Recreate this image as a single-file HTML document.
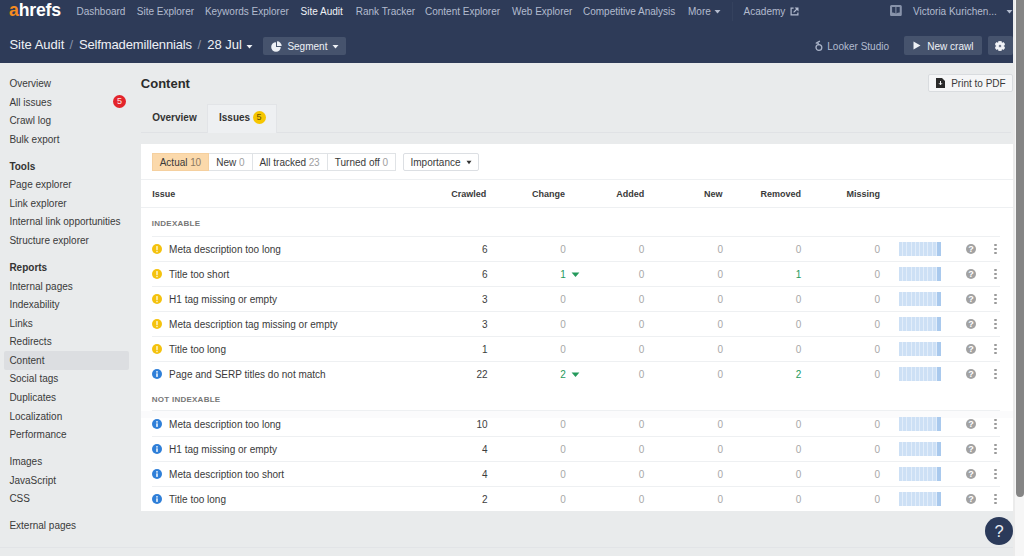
<!DOCTYPE html>
<html><head><meta charset="utf-8">
<style>
*{box-sizing:border-box;margin:0;padding:0}
html,body{width:1024px;height:556px;overflow:hidden;background:#e9ebec;font-family:"Liberation Sans",sans-serif;color:#333}
.a{position:absolute;white-space:nowrap}
.t10{font-size:10px;line-height:12px}
.t9{font-size:9px;line-height:12px}
.b{font-weight:bold}
#hdr{position:absolute;left:0;top:0;width:1014px;height:63px;background:#2e3b58}
.nav{color:#b3bccf}
.wht{color:#eef1f6}
.side{color:#3a3a3a}
.btn{position:absolute;background:#46536d;border-radius:2px}
.card{position:absolute;left:141px;top:144px;width:872px;height:367px;background:#fff}
.hl{position:absolute;height:1px;background:#eef0f2}
.seg{position:absolute;top:152.5px;height:18px;border:1px solid #dcdfe3;background:#fff}
.g{color:#9a9a9a}
.num{color:#3d3d3d;text-align:right}
.z{color:#a8a8a8}
.grn{color:#259a5c}
.spark{position:absolute;left:898.7px;width:42.3px;height:13.6px;background:repeating-linear-gradient(90deg,#cde0f5 0,#cde0f5 3.2px,#e2edfa 3.2px,#e2edfa 4.2px)}
.spark:after{content:"";position:absolute;right:0;top:0;width:3.6px;height:13.6px;background:#a9c9ed}
.ic{position:absolute;left:152px;width:10px;height:10px;border-radius:50%;color:#fff;font-size:8px;line-height:10px;text-align:center;font-weight:bold}
.yl{background:#f2c21b}
.bl{background:#2f7fd6}
.q{position:absolute;left:966px;width:10.2px;height:10.2px;border-radius:50%;background:#a2a2a2;color:#fff;font-size:9px;line-height:10.6px;text-align:center;font-weight:bold}
.kb{position:absolute;left:994px;width:3px;height:11px}
.kb i{position:absolute;left:0.4px;width:2.2px;height:2.2px;border-radius:50%;background:#9a9a9a}
#wrap{position:absolute;left:0;top:0;width:1024px;height:556px}
</style></head><body><div id="wrap">
<div id="hdr"></div>
<!-- logo -->
<div class="a b" style="left:9.3px;top:-1px;font-size:19px;line-height:22px;letter-spacing:-0.2px;color:#fff;transform:scaleX(0.93);transform-origin:0 0"><span style="color:#f68b1f">a</span>hrefs</div>
<!-- nav row 1 -->
<div class="a t10 nav" style="left:76.5px;top:6px">Dashboard</div>
<div class="a t10 nav" style="left:136.8px;top:6px">Site Explorer</div>
<div class="a t10 nav" style="left:204.9px;top:6px">Keywords Explorer</div>
<div class="a t10 wht" style="left:300.6px;top:6px">Site Audit</div>
<div class="a t10 nav" style="left:355.7px;top:6px">Rank Tracker</div>
<div class="a t10 nav" style="left:425px;top:6px">Content Explorer</div>
<div class="a t10 nav" style="left:512px;top:6px">Web Explorer</div>
<div class="a t10 nav" style="left:583px;top:6px">Competitive Analysis</div>
<div class="a t10 nav" style="left:688px;top:6px">More</div>
<svg class="a" style="left:714px;top:9px" width="7" height="5"><path d="M0.5 1h6L3.5 4.5z" fill="#b3bccf"/></svg>
<div class="a" style="left:732px;top:2px;width:1px;height:19px;background:#35425e"></div>
<div class="a t10 nav" style="left:743.6px;top:6px">Academy</div>
<svg class="a" style="left:789.5px;top:7.3px" width="9" height="9"><path d="M3.6 1.1H1.1V7.9H7.9V5.4" fill="none" stroke="#b3bccf" stroke-width="1.2"/><path d="M3.6 5.4L7 2" stroke="#b3bccf" stroke-width="1.2"/><path d="M4.6 0.5H8.5V4.4z" fill="#b3bccf"/></svg>
<svg class="a" style="left:889.8px;top:5.1px" width="12" height="11.2"><path fill-rule="evenodd" fill="#8893aa" d="M1.5 0h8.8a1.5 1.5 0 0 1 1.5 1.5v8.1a1.5 1.5 0 0 1-1.5 1.5h-8.8a1.5 1.5 0 0 1-1.5-1.5v-8.1a1.5 1.5 0 0 1 1.5-1.5zM2.1 2.1v5.5c1.4 0 2.5 0.3 3.3 0.9V2.1zM6.4 2.1v6.4c0.8-0.6 1.9-0.9 3.3-0.9V2.1z"/></svg>
<div class="a t10 nav" style="left:913px;top:6px">Victoria Kurichen...</div>
<svg class="a" style="left:1006px;top:9px" width="7" height="5"><path d="M0.5 1h6L3.5 4.5z" fill="#b3bccf"/></svg>

<!-- nav row 2 -->
<div class="a wht" style="left:9.4px;top:37px;font-size:13px;line-height:16px">Site Audit</div>
<div class="a" style="left:69.5px;top:37px;font-size:13px;line-height:16px;color:#8792a8">/</div>
<div class="a wht" style="left:79px;top:37px;font-size:13px;line-height:16px;letter-spacing:-0.14px">Selfmademillennials</div>
<div class="a" style="left:197.5px;top:37px;font-size:13px;line-height:16px;color:#8792a8">/</div>
<div class="a wht" style="left:207.3px;top:37px;font-size:13px;line-height:16px">28 Jul</div>
<svg class="a" style="left:245.5px;top:44px" width="7" height="5"><path d="M0.5 1h6L3.5 4.5z" fill="#eef1f6"/></svg>
<div class="btn" style="left:263px;top:36.6px;width:83px;height:18px"></div>
<svg class="a" style="left:270.5px;top:40.5px" width="11" height="11"><path d="M5 1.2A4.8 4.8 0 1 0 9.8 6H5z" fill="#eef1f6"/><path d="M6 0.3A4.8 4.8 0 0 1 10.7 5H6z" fill="#eef1f6"/></svg>
<div class="a t10 wht" style="left:287.4px;top:41px">Segment</div>
<svg class="a" style="left:331.5px;top:44px" width="7" height="5"><path d="M0.5 1h6L3.5 4.5z" fill="#eef1f6"/></svg>

<svg class="a" style="left:813.5px;top:40px" width="10" height="12"><circle cx="4.9" cy="7.5" r="2.9" fill="none" stroke="#a9b3c8" stroke-width="1.3"/><path d="M2.3 3.1L5.4 1.3M3.7 2.6L4.6 4.5" fill="none" stroke="#a9b3c8" stroke-width="1.4" stroke-linecap="round"/></svg>
<div class="a t10 nav" style="left:827.3px;top:41px">Looker Studio</div>
<div class="btn" style="left:904px;top:36.3px;width:78px;height:18.5px"></div>
<svg class="a" style="left:912.5px;top:41px" width="8" height="9"><path d="M0.5 0.5L7.5 4.5L0.5 8.5z" fill="#eef1f6"/></svg>
<div class="a t10 wht" style="left:927.3px;top:41px">New crawl</div>
<div class="btn" style="left:988px;top:36.3px;width:24.5px;height:18.5px"></div>
<svg class="a" style="left:995.3px;top:40.8px" width="10" height="10"><path fill-rule="evenodd" d="M3.05 1.62L3.67 1.34L3.88 0.13L6.12 0.13L6.33 1.34L6.95 1.62L7.51 2.01L8.66 1.59L9.78 3.54L8.84 4.32L8.90 5.00L8.84 5.68L9.78 6.46L8.66 8.41L7.51 7.99L6.95 8.38L6.33 8.66L6.12 9.87L3.88 9.87L3.67 8.66L3.05 8.38L2.49 7.99L1.34 8.41L0.22 6.46L1.16 5.68L1.10 5.00L1.16 4.32L0.22 3.54L1.34 1.59L2.49 2.01ZM6.50 5A1.5 1.5 0 1 0 3.50 5A1.5 1.5 0 1 0 6.50 5Z" fill="#f2f4f8" stroke="#f2f4f8" stroke-width="0.8" stroke-linejoin="round"/></svg>

<!-- scrollbar -->
<div class="a" style="left:1013px;top:0;width:11px;height:556px;background:#f6f6f6;border-left:2px solid #ebebeb"></div>
<div class="a" style="left:1015.5px;top:0;width:8px;height:497px;background:#858585;border-radius:0 0 4px 4px"></div>

<!-- sidebar -->
<div class="a" style="left:4px;top:350.5px;width:125px;height:19px;background:#dcdee1;border-radius:2px"></div>
<div class="a t10 side" style="left:9.4px;top:78px">Overview</div>
<div class="a t10 side" style="left:9.4px;top:96.7px">All issues</div>
<div class="a" style="left:113px;top:95.2px;width:13px;height:13px;border-radius:50%;background:#e3242b;color:#fde8e8;font-size:9px;line-height:13.5px;text-align:center">5</div>
<div class="a t10 side" style="left:9.4px;top:115.3px">Crawl log</div>
<div class="a t10 side" style="left:9.4px;top:133.6px">Bulk export</div>
<div class="a t10 side b" style="left:9.4px;top:160.9px;color:#333">Tools</div>
<div class="a t10 side" style="left:9.4px;top:178.9px">Page explorer</div>
<div class="a t10 side" style="left:9.4px;top:197.6px">Link explorer</div>
<div class="a t10 side" style="left:9.4px;top:215.8px">Internal link opportunities</div>
<div class="a t10 side" style="left:9.4px;top:234.5px">Structure explorer</div>
<div class="a t10 side b" style="left:9.4px;top:261.8px;color:#333">Reports</div>
<div class="a t10 side" style="left:9.4px;top:280.5px">Internal pages</div>
<div class="a t10 side" style="left:9.4px;top:298.7px">Indexability</div>
<div class="a t10 side" style="left:9.4px;top:318.2px">Links</div>
<div class="a t10 side" style="left:9.4px;top:335.6px">Redirects</div>
<div class="a t10 side" style="left:9.4px;top:355.2px">Content</div>
<div class="a t10 side" style="left:9.4px;top:372.8px">Social tags</div>
<div class="a t10 side" style="left:9.4px;top:391.5px">Duplicates</div>
<div class="a t10 side" style="left:9.4px;top:410.6px">Localization</div>
<div class="a t10 side" style="left:9.4px;top:428.9px">Performance</div>
<div class="a t10 side" style="left:9.4px;top:456.1px">Images</div>
<div class="a t10 side" style="left:9.4px;top:474.6px">JavaScript</div>
<div class="a t10 side" style="left:9.4px;top:492.9px">CSS</div>
<div class="a t10 side" style="left:9.4px;top:520.1px">External pages</div>
<div class="a" style="left:0;top:547px;width:1013px;height:1px;background:#e2e4e7"></div>

<!-- page title -->
<div class="a b" style="left:140.8px;top:75.6px;font-size:13px;line-height:16px;color:#2b2b2b">Content</div>
<div class="a" style="left:928px;top:74px;width:85px;height:18px;border:1px solid #d9dcdf;background:#f5f6f7;border-radius:2px"></div>
<svg class="a" style="left:936px;top:77.5px" width="9" height="10"><path d="M0 0h6l3 3v7H0z" fill="#2a2a2a"/><path d="M4.5 3v3.5M3 5.2l1.5 1.6 1.5-1.6" stroke="#f5f6f7" stroke-width="1" fill="none"/></svg>
<div class="a t10" style="left:951.2px;top:77.5px;color:#3a3a3a">Print to PDF</div>

<!-- tabs -->
<div class="a" style="left:141px;top:132px;width:870px;height:1px;background:#e0e2e5"></div>
<div class="a" style="left:207px;top:103.5px;width:69.5px;height:29.5px;border:1px solid #e2e4e7;border-bottom:none;background:#eef0f2"></div>
<div class="a t10 b" style="left:152.2px;top:112.4px;color:#333">Overview</div>
<div class="a t10 b" style="left:219px;top:112.4px;color:#333">Issues</div>
<div class="a" style="left:252.5px;top:111px;width:13px;height:13px;border-radius:50%;background:#f6c600;color:#6a5200;font-size:9px;line-height:13.5px;text-align:center">5</div>

<!-- card -->
<div class="card"></div>
<div class="seg" style="left:152px;width:244px;border-color:#e0e3e6"></div>
<div class="a" style="left:152px;top:152.5px;width:57px;height:18px;background:#fbd9ab;border:1px solid #f5d09f"></div>
<div class="a" style="left:251.5px;top:153.5px;width:1px;height:16px;background:#e0e3e6"></div>
<div class="a" style="left:326.5px;top:153.5px;width:1px;height:16px;background:#e0e3e6"></div>
<div class="seg" style="left:402.8px;width:76px;border-radius:2px"></div>
<div class="a t10" style="left:159.7px;top:156.6px;color:#3a3a3a">Actual <span style="letter-spacing:-0.3px;color:#8c7a63">10</span></div>
<div class="a t10" style="left:216.2px;top:156.6px;color:#3a3a3a">New <span style="letter-spacing:-0.3px;color:#a0a0a0">0</span></div>
<div class="a t10" style="left:259.4px;top:156.6px;color:#3a3a3a">All tracked <span style="letter-spacing:-0.3px;color:#a0a0a0">23</span></div>
<div class="a t10" style="left:334.8px;top:156.6px;color:#3a3a3a">Turned off <span style="letter-spacing:-0.3px;color:#a0a0a0">0</span></div>
<div class="a t10" style="left:410.5px;top:156.6px;color:#3a3a3a">Importance</div>
<svg class="a" style="left:466px;top:160px" width="6" height="5"><path d="M0.5 0.8h5L3 4.2z" fill="#333"/></svg>
<div class="hl" style="left:141px;top:179px;width:872px"></div>

<!-- header -->
<div class="a t9 b" style="left:152.2px;top:188px;color:#3a3a3a">Issue</div>
<div class="a t9 b" style="left:451.2px;top:188px;color:#3a3a3a">Crawled</div>
<div class="a t9 b" style="left:532.1px;top:188px;color:#3a3a3a">Change</div>
<div class="a t9 b" style="left:616.2px;top:188px;color:#3a3a3a">Added</div>
<div class="a t9 b" style="left:703.9px;top:188px;color:#3a3a3a">New</div>
<div class="a t9 b" style="left:760.4px;top:188px;color:#3a3a3a">Removed</div>
<div class="a t9 b" style="left:846.4px;top:188px;color:#3a3a3a">Missing</div>
<div class="hl" style="left:141px;top:206.5px;width:872px"></div>

<div class="a" style="left:984.8px;top:517px;width:28.4px;height:28.4px;border-radius:50%;background:#2b3a5a;color:#e8ecf4;font-size:16.5px;line-height:28.4px;text-align:center">?</div>
<!--ROWS-->
<div class="a b" style="left:151.8px;top:219.2px;font-size:8px;line-height:10px;letter-spacing:0.25px;color:#777">INDEXABLE</div>
<div class="hl" style="left:152px;top:236px;width:848px"></div>
<svg class="a" style="left:151.8px;top:244.4px" width="10" height="10"><circle cx="5" cy="5" r="5" fill="#f4c20e"/><rect x="4.25" y="2" width="1.5" height="4.2" rx="0.6" fill="#fff6cf"/><circle cx="5" cy="7.6" r="0.8" fill="#fff6cf"/></svg>
<div class="a t10 side" style="left:169.1px;top:244.0px;">Meta description too long</div>
<div class="a t10 num" style="right:536.4px;top:244.0px">6</div>
<div class="a t10 z" style="right:458.2px;top:244.0px">0</div>
<div class="a t10 z" style="right:379.6px;top:244.0px">0</div>
<div class="a t10 z" style="right:301.0px;top:244.0px">0</div>
<div class="a t10 z" style="right:222.6px;top:244.0px">0</div>
<div class="a t10 z" style="right:143.9px;top:244.0px">0</div>
<div class="spark" style="top:242.2px"></div>
<div class="q" style="top:244.0px">?</div>
<div class="kb" style="top:244.1px"><i style="top:0.2px"></i><i style="top:4.2px"></i><i style="top:8.2px"></i></div>
<div class="hl" style="left:152px;top:261px;width:848px"></div>
<svg class="a" style="left:151.8px;top:269.4px" width="10" height="10"><circle cx="5" cy="5" r="5" fill="#f4c20e"/><rect x="4.25" y="2" width="1.5" height="4.2" rx="0.6" fill="#fff6cf"/><circle cx="5" cy="7.6" r="0.8" fill="#fff6cf"/></svg>
<div class="a t10 side" style="left:169.1px;top:269.0px;">Title too short</div>
<div class="a t10 num" style="right:536.4px;top:269.0px">6</div>
<div class="a t10 grn" style="right:458.2px;top:269.0px">1</div>
<svg class="a" style="left:570.5px;top:271.5px" width="9" height="6"><path d="M0.6 0.4h7.8L4.5 4.9z" fill="#259a5c"/></svg>
<div class="a t10 z" style="right:379.6px;top:269.0px">0</div>
<div class="a t10 z" style="right:301.0px;top:269.0px">0</div>
<div class="a t10 grn" style="right:222.6px;top:269.0px">1</div>
<div class="a t10 z" style="right:143.9px;top:269.0px">0</div>
<div class="spark" style="top:267.2px"></div>
<div class="q" style="top:269.0px">?</div>
<div class="kb" style="top:269.1px"><i style="top:0.2px"></i><i style="top:4.2px"></i><i style="top:8.2px"></i></div>
<div class="hl" style="left:152px;top:286px;width:848px"></div>
<svg class="a" style="left:151.8px;top:294.4px" width="10" height="10"><circle cx="5" cy="5" r="5" fill="#f4c20e"/><rect x="4.25" y="2" width="1.5" height="4.2" rx="0.6" fill="#fff6cf"/><circle cx="5" cy="7.6" r="0.8" fill="#fff6cf"/></svg>
<div class="a t10 side" style="left:169.1px;top:294.0px;">H1 tag missing or empty</div>
<div class="a t10 num" style="right:536.4px;top:294.0px">3</div>
<div class="a t10 z" style="right:458.2px;top:294.0px">0</div>
<div class="a t10 z" style="right:379.6px;top:294.0px">0</div>
<div class="a t10 z" style="right:301.0px;top:294.0px">0</div>
<div class="a t10 z" style="right:222.6px;top:294.0px">0</div>
<div class="a t10 z" style="right:143.9px;top:294.0px">0</div>
<div class="spark" style="top:292.2px"></div>
<div class="q" style="top:294.0px">?</div>
<div class="kb" style="top:294.1px"><i style="top:0.2px"></i><i style="top:4.2px"></i><i style="top:8.2px"></i></div>
<div class="hl" style="left:152px;top:311px;width:848px"></div>
<svg class="a" style="left:151.8px;top:319.4px" width="10" height="10"><circle cx="5" cy="5" r="5" fill="#f4c20e"/><rect x="4.25" y="2" width="1.5" height="4.2" rx="0.6" fill="#fff6cf"/><circle cx="5" cy="7.6" r="0.8" fill="#fff6cf"/></svg>
<div class="a t10 side" style="left:169.1px;top:319.0px;">Meta description tag missing or empty</div>
<div class="a t10 num" style="right:536.4px;top:319.0px">3</div>
<div class="a t10 z" style="right:458.2px;top:319.0px">0</div>
<div class="a t10 z" style="right:379.6px;top:319.0px">0</div>
<div class="a t10 z" style="right:301.0px;top:319.0px">0</div>
<div class="a t10 z" style="right:222.6px;top:319.0px">0</div>
<div class="a t10 z" style="right:143.9px;top:319.0px">0</div>
<div class="spark" style="top:317.2px"></div>
<div class="q" style="top:319.0px">?</div>
<div class="kb" style="top:319.1px"><i style="top:0.2px"></i><i style="top:4.2px"></i><i style="top:8.2px"></i></div>
<div class="hl" style="left:152px;top:336px;width:848px"></div>
<svg class="a" style="left:151.8px;top:344.4px" width="10" height="10"><circle cx="5" cy="5" r="5" fill="#f4c20e"/><rect x="4.25" y="2" width="1.5" height="4.2" rx="0.6" fill="#fff6cf"/><circle cx="5" cy="7.6" r="0.8" fill="#fff6cf"/></svg>
<div class="a t10 side" style="left:169.1px;top:344.0px;">Title too long</div>
<div class="a t10 num" style="right:536.4px;top:344.0px">1</div>
<div class="a t10 z" style="right:458.2px;top:344.0px">0</div>
<div class="a t10 z" style="right:379.6px;top:344.0px">0</div>
<div class="a t10 z" style="right:301.0px;top:344.0px">0</div>
<div class="a t10 z" style="right:222.6px;top:344.0px">0</div>
<div class="a t10 z" style="right:143.9px;top:344.0px">0</div>
<div class="spark" style="top:342.2px"></div>
<div class="q" style="top:344.0px">?</div>
<div class="kb" style="top:344.1px"><i style="top:0.2px"></i><i style="top:4.2px"></i><i style="top:8.2px"></i></div>
<div class="hl" style="left:152px;top:361px;width:848px"></div>
<svg class="a" style="left:151.8px;top:369.4px" width="10" height="10"><circle cx="5" cy="5" r="5" fill="#2f7fd8"/><circle cx="5" cy="2.8" r="0.85" fill="#fff"/><rect x="4.25" y="4.3" width="1.5" height="3.6" rx="0.4" fill="#fff"/></svg>
<div class="a t10 side" style="left:169.1px;top:369.0px;">Page and SERP titles do not match</div>
<div class="a t10 num" style="right:536.4px;top:369.0px">22</div>
<div class="a t10 grn" style="right:458.2px;top:369.0px">2</div>
<svg class="a" style="left:570.5px;top:371.5px" width="9" height="6"><path d="M0.6 0.4h7.8L4.5 4.9z" fill="#259a5c"/></svg>
<div class="a t10 z" style="right:379.6px;top:369.0px">0</div>
<div class="a t10 z" style="right:301.0px;top:369.0px">0</div>
<div class="a t10 grn" style="right:222.6px;top:369.0px">2</div>
<div class="a t10 z" style="right:143.9px;top:369.0px">0</div>
<div class="spark" style="top:367.2px"></div>
<div class="q" style="top:369.0px">?</div>
<div class="kb" style="top:369.1px"><i style="top:0.2px"></i><i style="top:4.2px"></i><i style="top:8.2px"></i></div>
<div class="a b" style="left:151.8px;top:394.8px;font-size:8px;line-height:10px;letter-spacing:0.25px;color:#777">NOT INDEXABLE</div>
<div class="a" style="left:141px;top:411px;width:872px;height:7px;background:#fbfbfc"></div>
<div class="hl" style="left:152px;top:410px;width:848px;height:1px"></div>
<svg class="a" style="left:151.8px;top:419.4px" width="10" height="10"><circle cx="5" cy="5" r="5" fill="#2f7fd8"/><circle cx="5" cy="2.8" r="0.85" fill="#fff"/><rect x="4.25" y="4.3" width="1.5" height="3.6" rx="0.4" fill="#fff"/></svg>
<div class="a t10 side" style="left:169.1px;top:419.0px;">Meta description too long</div>
<div class="a t10 num" style="right:536.4px;top:419.0px">10</div>
<div class="a t10 z" style="right:458.2px;top:419.0px">0</div>
<div class="a t10 z" style="right:379.6px;top:419.0px">0</div>
<div class="a t10 z" style="right:301.0px;top:419.0px">0</div>
<div class="a t10 z" style="right:222.6px;top:419.0px">0</div>
<div class="a t10 z" style="right:143.9px;top:419.0px">0</div>
<div class="spark" style="top:417.2px"></div>
<div class="q" style="top:419.0px">?</div>
<div class="kb" style="top:419.1px"><i style="top:0.2px"></i><i style="top:4.2px"></i><i style="top:8.2px"></i></div>
<div class="hl" style="left:152px;top:436px;width:848px"></div>
<svg class="a" style="left:151.8px;top:444.4px" width="10" height="10"><circle cx="5" cy="5" r="5" fill="#2f7fd8"/><circle cx="5" cy="2.8" r="0.85" fill="#fff"/><rect x="4.25" y="4.3" width="1.5" height="3.6" rx="0.4" fill="#fff"/></svg>
<div class="a t10 side" style="left:169.1px;top:444.0px;">H1 tag missing or empty</div>
<div class="a t10 num" style="right:536.4px;top:444.0px">4</div>
<div class="a t10 z" style="right:458.2px;top:444.0px">0</div>
<div class="a t10 z" style="right:379.6px;top:444.0px">0</div>
<div class="a t10 z" style="right:301.0px;top:444.0px">0</div>
<div class="a t10 z" style="right:222.6px;top:444.0px">0</div>
<div class="a t10 z" style="right:143.9px;top:444.0px">0</div>
<div class="spark" style="top:442.2px"></div>
<div class="q" style="top:444.0px">?</div>
<div class="kb" style="top:444.1px"><i style="top:0.2px"></i><i style="top:4.2px"></i><i style="top:8.2px"></i></div>
<div class="hl" style="left:152px;top:461px;width:848px"></div>
<svg class="a" style="left:151.8px;top:469.4px" width="10" height="10"><circle cx="5" cy="5" r="5" fill="#2f7fd8"/><circle cx="5" cy="2.8" r="0.85" fill="#fff"/><rect x="4.25" y="4.3" width="1.5" height="3.6" rx="0.4" fill="#fff"/></svg>
<div class="a t10 side" style="left:169.1px;top:469.0px;">Meta description too short</div>
<div class="a t10 num" style="right:536.4px;top:469.0px">4</div>
<div class="a t10 z" style="right:458.2px;top:469.0px">0</div>
<div class="a t10 z" style="right:379.6px;top:469.0px">0</div>
<div class="a t10 z" style="right:301.0px;top:469.0px">0</div>
<div class="a t10 z" style="right:222.6px;top:469.0px">0</div>
<div class="a t10 z" style="right:143.9px;top:469.0px">0</div>
<div class="spark" style="top:467.2px"></div>
<div class="q" style="top:469.0px">?</div>
<div class="kb" style="top:469.1px"><i style="top:0.2px"></i><i style="top:4.2px"></i><i style="top:8.2px"></i></div>
<div class="hl" style="left:152px;top:486px;width:848px"></div>
<svg class="a" style="left:151.8px;top:494.4px" width="10" height="10"><circle cx="5" cy="5" r="5" fill="#2f7fd8"/><circle cx="5" cy="2.8" r="0.85" fill="#fff"/><rect x="4.25" y="4.3" width="1.5" height="3.6" rx="0.4" fill="#fff"/></svg>
<div class="a t10 side" style="left:169.1px;top:494.0px;">Title too long</div>
<div class="a t10 num" style="right:536.4px;top:494.0px">2</div>
<div class="a t10 z" style="right:458.2px;top:494.0px">0</div>
<div class="a t10 z" style="right:379.6px;top:494.0px">0</div>
<div class="a t10 z" style="right:301.0px;top:494.0px">0</div>
<div class="a t10 z" style="right:222.6px;top:494.0px">0</div>
<div class="a t10 z" style="right:143.9px;top:494.0px">0</div>
<div class="spark" style="top:492.2px"></div>
<div class="q" style="top:494.0px">?</div>
<div class="kb" style="top:494.1px"><i style="top:0.2px"></i><i style="top:4.2px"></i><i style="top:8.2px"></i></div>
<!--/ROWS-->
</div></body></html>
